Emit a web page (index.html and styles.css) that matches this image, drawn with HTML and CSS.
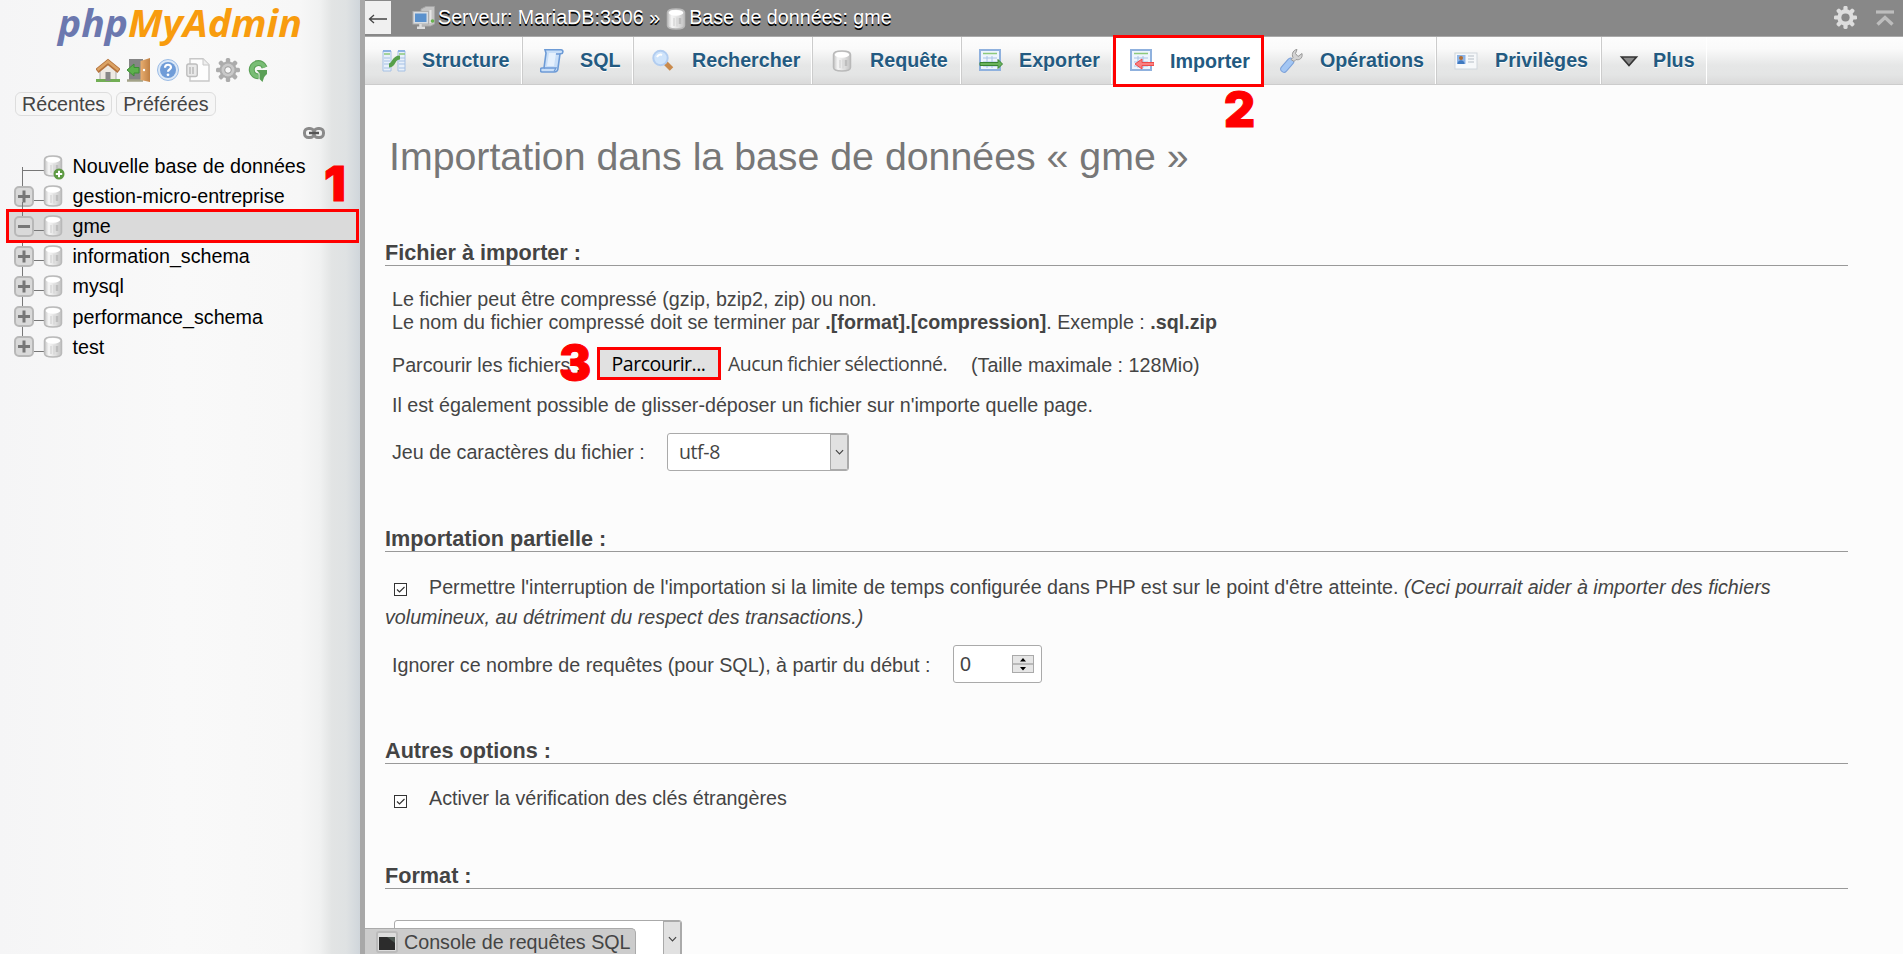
FILE: index.html
```html
<!DOCTYPE html>
<html lang="fr">
<head>
<meta charset="utf-8">
<title>phpMyAdmin - Importer</title>
<link rel="stylesheet" href="styles.css">
</head>
<body>
<svg class="defs" width="0" height="0">
  <defs>
    <linearGradient id="cyl" x1="0" x2="1" y1="0" y2="0"><stop offset="0" stop-color="#c4c4c4"/><stop offset=".25" stop-color="#f6f6f6"/><stop offset=".6" stop-color="#e2e2e2"/><stop offset="1" stop-color="#c2c2c2"/></linearGradient>
    <linearGradient id="door" x1="0" x2="1"><stop offset="0" stop-color="#e9ae70"/><stop offset="1" stop-color="#bf8044"/></linearGradient>
    <symbol id="db" viewBox="0 0 24 24"><path d="M3.500 5.500C3.500 3.500 6.500 2 12 2s8.500 1.500 8.500 3.500v13c0 2-3 3.500-8.500 3.500s-8.500-1.500-8.500-3.500z" fill="url(#cyl)" stroke="#b9b9b9" stroke-width="1.500"/><ellipse cx="12" cy="5.800" rx="7.300" ry="2.900" fill="#fff"/><path d="M10 11v8M13 10.500v9" stroke="#d8d8d8" stroke-width="1.500"/><path d="M16 11v6" stroke="#bdbdbd" stroke-width="2.500"/></symbol>
    <symbol id="gear" viewBox="0 0 24 24"><g fill="currentColor"><rect x="9.800" y="0" width="4.400" height="24" rx="1.500"/><rect x="0" y="9.800" width="24" height="4.400" rx="1.500"/><rect x="9.800" y="0" width="4.400" height="24" rx="1.500" transform="rotate(45 12 12)"/><rect x="9.800" y="0" width="4.400" height="24" rx="1.500" transform="rotate(135 12 12)"/><circle cx="12" cy="12" r="8.500"/></g></symbol>
    <symbol id="sheet" viewBox="0 0 24 24"><rect x="1" y="1" width="20" height="20" fill="#eef5fd" stroke="#8fb1de" stroke-width="2"/><path d="M4 4.500h14" stroke="#8cc97c" stroke-width="1.500"/><path d="M4 9h14M4 13h14M4 17h14M8 7v12M13 7v12" stroke="#a9c4e6" stroke-width="1"/></symbol>
  </defs>
</svg>
<div class="app">
  <aside class="nav">
    <svg class="logo" viewBox="0 0 250 46"><text x="2" y="32" textLength="70" lengthAdjust="spacingAndGlyphs" class="logo-a">php</text><text x="72" y="32" textLength="174" lengthAdjust="spacingAndGlyphs" class="logo-b">MyAdmin</text></svg>
    <div class="quick">
      <svg viewBox="0 0 24 24"><path d="M4 12 12 4l8 8v10H4z" fill="#eee9e2" stroke="#aaa"/><path d="M0 22.500h24" stroke="#72ae55" stroke-width="3"/><rect x="9.500" y="14" width="5" height="9" fill="#888"/><path d="M1 13 12 4 23 13" fill="none" stroke="#b4723c" stroke-width="5"/><path d="M1.500 12 12 3.500 22.500 12" fill="none" stroke="#dba263" stroke-width="2.600"/></svg>
      <svg viewBox="0 0 24 24"><rect x="3" y="1" width="14" height="21" fill="#858585"/><path d="M1 22.500h16" stroke="#a3a389" stroke-width="2.500"/><path d="M14.500 3 24 0v24l-9.500-2z" fill="url(#door)"/><circle cx="18" cy="12" r="1.200" fill="#fff"/><path d="M1 12 8 6V9.500h5v5.500H8v3z" fill="#5cb04c" stroke="#3d8f35"/></svg>
      <svg viewBox="0 0 24 24"><circle cx="12" cy="12" r="10.500" fill="#dbe8f7" stroke="#9bbce6"/><circle cx="12" cy="12" r="8" fill="#6f9cd8"/><path d="M9 9.800c0-4 6-4 6-.5 0 2-3 2-3 4.500" fill="none" stroke="#fff" stroke-width="2.200"/><circle cx="12" cy="16.800" r="1.400" fill="#fff"/></svg>
      <svg viewBox="0 0 24 24"><path d="M4 .8h13l6 6V23H4z" fill="#fdfdfd" stroke="#c8c8c8" stroke-width="1.400"/><path d="M17 1v6h6" fill="#eee" stroke="#c8c8c8"/><rect x=".8" y="6" width="10.500" height="12.500" rx="2" fill="#e9e9e9" stroke="#bdbdbd" stroke-width="1.400"/><path d="M4 9v7M7 9v7" stroke="#c6c6c6" stroke-width="2"/></svg>
      <svg class="g-gear" viewBox="0 0 24 24"><use href="#gear"/><circle cx="12" cy="12" r="6.500" fill="#c9c9c9"/><circle cx="12" cy="12" r="3.300" fill="#f8f8f8" stroke="#999"/></svg>
      <svg viewBox="0 0 24 24"><path d="M18.600 9.500A6.600 6.600 0 1 0 12.500 18.300" fill="none" stroke="#5ba057" stroke-width="6"/><path d="M18.600 9.500A6.600 6.600 0 1 0 12.500 18.300" fill="none" stroke="#79bd75" stroke-width="3.800"/><path d="M10.500 12H21v4l-2 2-1 1.500L16.500 24l-3-3v-5.500z" fill="#5ba057"/></svg>
    </div>
    <div class="lists"><span>Récentes</span><span>Préférées</span></div>
    <svg class="chain" viewBox="0 0 22 12"><rect x="1.500" y="1.500" width="9.500" height="9" rx="4" fill="none" stroke="#8a8a8a" stroke-width="3"/><rect x="11" y="1.500" width="9.500" height="9" rx="4" fill="none" stroke="#8a8a8a" stroke-width="3"/><path d="M6 6h10" stroke="#555" stroke-width="2.500"/></svg>
    <ul class="tree">
      <li class="first"><i class="box none"></i><svg><use href="#db"/></svg><svg class="add" viewBox="0 0 12 12"><circle cx="6" cy="6" r="5.500" fill="#5e9a43"/><path d="M6 2.800v6.400M2.800 6h6.400" stroke="#fff" stroke-width="2"/></svg><span>Nouvelle base de données</span></li>
      <li><i class="box plus"></i><svg><use href="#db"/></svg><span>gestion-micro-entreprise</span></li>
      <li class="current"><i class="box"></i><svg><use href="#db"/></svg><span>gme</span></li>
      <li><i class="box plus"></i><svg><use href="#db"/></svg><span>information_schema</span></li>
      <li><i class="box plus"></i><svg><use href="#db"/></svg><span>mysql</span></li>
      <li><i class="box plus"></i><svg><use href="#db"/></svg><span>performance_schema</span></li>
      <li><i class="box plus"></i><svg><use href="#db"/></svg><span>test</span></li>
    </ul>
    <b class="step step1">1</b>
  </aside>
  <main class="page">
    <header class="crumbs">
      <span class="hide"><svg viewBox="0 0 20 10"><path d="M19 5H1.500M6 1 1.500 5 6 9" fill="none" stroke="#444" stroke-width="1.300"/></svg></span>
      <svg class="srv" viewBox="0 0 24 24"><path d="M9 3 14 .5h8.500V18l-4 2H9z" fill="#c4c4c4" stroke="#a5a5a5"/><path d="M18.500 4v13" stroke="#e6e6e6" stroke-width="2"/><circle cx="20.500" cy="15" r="1.800" fill="#67b34d"/><rect x="1" y="5.500" width="15.500" height="12.500" fill="#d8dde2" stroke="#b0b0b0"/><rect x="3" y="7.500" width="11.500" height="8.500" fill="#5a91cd"/><path d="M8.500 18v3M5 21.800h8" stroke="#ddd" stroke-width="2.500"/></svg>
      <span class="c1">Serveur: MariaDB:3306 »</span>
      <svg class="cdb"><use href="#db"/></svg>
      <span>Base de données: gme</span>
      <svg class="cog" viewBox="0 0 24 24"><use href="#gear"/><circle cx="12" cy="12" r="4.300" fill="#888"/></svg>
      <svg class="top" viewBox="0 0 18 16"><path d="M0 2h18" stroke="#bdbdbd" stroke-width="3.200"/><path d="M1.500 14.500 9 7.500l7.500 7" fill="none" stroke="#bdbdbd" stroke-width="3.400"/></svg>
    </header>
    <nav class="tabs">
      <a class="w1"><svg viewBox="0 0 24 24"><path d="M1 2h8v20H1zM16 2h7v20h-7z" fill="#e8f0fa" stroke="#a5c0e4"/><path d="M1 2h8M16 2h7" stroke="#8db3e3" stroke-width="2"/><path d="M2 5h6M17 5h6" stroke="#8cc97c" stroke-width="1.500"/><path d="M2 9h6M2 12h6M2 15h6M2 19h6M17 9h6M17 12h6M17 15h6M17 19h6" stroke="#a5c0e4"/><path d="M7 16.500c6 0 3-8 11-8" fill="none" stroke="#56a04a" stroke-width="4.200"/></svg>Structure</a>
      <a class="w2"><svg viewBox="0 0 24 24"><path d="M5 .8h16c3 0 2 4 0 4h-1L18 19c0 3-2 4-4 4H2c-2 0-2-4 0-4h2L6 4z" fill="#c9dff8" stroke="#6d9bd6" stroke-width="1.600"/><path d="M4 19h12l-2 3.500M19.500 5h-4" fill="none" stroke="#6d9bd6" stroke-width="1.300"/><path d="M9 4h7l-2 13H7z" fill="#e6f1fd"/></svg>SQL</a>
      <a class="w3"><svg viewBox="0 0 24 24"><path d="m14.500 14 6 6" stroke="#c98a4c" stroke-width="5"/><circle cx="9.500" cy="9" r="7.200" fill="#cfe4fb" stroke="#b2cdf0" stroke-width="2"/><path d="M6 8c1-2 3-3 5-2" stroke="#fff" stroke-width="2" fill="none"/></svg>Rechercher</a>
      <a class="w4"><svg><use href="#db"/></svg>Requête</a>
      <a class="w5"><svg viewBox="0 0 24 24"><use href="#sheet"/><path d="M1 13.500h18v-3l4.500 4.500-4.500 4.500v-3H1z" fill="#69b35b" stroke="#398333"/></svg>Exporter</a>
      <a class="w6 active"><svg viewBox="0 0 24 24"><use href="#sheet"/><path d="M24 13.500H12v-3.500l-7 5 7 5v-3.500h12z" fill="#f98080" stroke="#ee4a4a"/></svg>Importer<b class="step step2">2</b></a>
      <a class="w7"><svg viewBox="0 0 24 24"><path d="M4 20 10.500 12.500" stroke="#7ba0d8" stroke-width="7.500" stroke-linecap="round"/><path d="m4 20 6.500-7.500" stroke="#a3c6f3" stroke-width="5.500" stroke-linecap="round"/><path d="m11 10.500 2-2c-2-4 1-8 4-8l-1.500 4 2.500 3 4-3c1 5-3 7-6 6l-2 2z" fill="#d3d3d3" stroke="#999"/></svg>Opérations</a>
      <a class="w8"><svg viewBox="0 0 24 24"><rect x="1" y="4" width="22" height="16" fill="#f6f8fa" stroke="#d0d6dc"/><rect x="3" y="6" width="8.500" height="9" fill="#8bb3e6"/><circle cx="7" cy="9" r="2" fill="#b06c30"/><path d="M3.500 15c0-5 7-5 7 0z" fill="#3f79c0"/><path d="M14 7h6M14 10h6M14 13h6" stroke="#b6bec6"/></svg>Privilèges</a>
      <a class="w9"><svg viewBox="0 0 24 24"><path d="M4.500 8h15L12 16.500z" fill="#888" stroke="#333" stroke-width="1.600"/></svg>Plus</a>
    </nav>
    <h2>Importation dans la base de données « gme »</h2>
    <section class="s1">
      <h3>Fichier à importer&nbsp;:</h3>
      <p class="intro">Le fichier peut être compressé (gzip, bzip2, zip) ou non.<br>Le nom du fichier compressé doit se terminer par <b>.[format].[compression]</b>. Exemple&nbsp;: <b>.sql.zip</b></p>
      <div class="file"><span class="flabel">Parcourir les fichiers&nbsp;:</span><span class="browse">Parcourir...</span><span class="chosen">Aucun fichier sélectionné.</span><span>(Taille maximale&nbsp;: 128Mio)</span><b class="step step3">3</b></div>
      <p class="drop">Il est également possible de glisser-déposer un fichier sur n'importe quelle page.</p>
      <div class="charset"><span>Jeu de caractères du fichier&nbsp;:</span><div class="select"><span>utf-8</span><i><svg viewBox="0 0 10 6"><path d="m1 1 4 4 4-4" fill="none" stroke="#444" stroke-width="1.300"/></svg></i></div></div>
    </section>
    <section class="s2">
      <h3>Importation partielle&nbsp;:</h3>
      <p class="opt"><svg class="check" viewBox="0 0 13 13"><rect x=".5" y=".5" width="12" height="12" fill="#fff" stroke="#333"/><path d="m3 6.500 2.500 2.500L10.500 4" fill="none" stroke="#333" stroke-width="1.200"/></svg>Permettre l'interruption de l'importation si la limite de temps configurée dans PHP est sur le point d'être atteinte. <em>(Ceci pourrait aider à importer des fichiers<br>volumineux, au détriment du respect des transactions.)</em></p>
      <div class="skip"><span>Ignorer ce nombre de requêtes (pour SQL), à partir du début&nbsp;:</span><div class="number"><span>0</span><svg viewBox="0 0 22 18"><rect x=".5" y=".5" width="21" height="17" fill="#e6e6e6" stroke="#aaa"/><path d="M0 9h22" stroke="#aaa" stroke-width="1.500"/><path d="M8 6.500h6l-3-3.500zM8 12h6l-3 3.500z"/></svg></div></div>
    </section>
    <section class="s3">
      <h3>Autres options&nbsp;:</h3>
      <p class="opt"><svg class="check" viewBox="0 0 13 13"><rect x=".5" y=".5" width="12" height="12" fill="#fff" stroke="#333"/><path d="m3 6.500 2.500 2.500L10.500 4" fill="none" stroke="#333" stroke-width="1.200"/></svg>Activer la vérification des clés étrangères</p>
    </section>
    <section class="s4">
      <h3>Format&nbsp;:</h3>
      <div class="select wide"><span></span><i><svg viewBox="0 0 10 6"><path d="m1 1 4 4 4-4" fill="none" stroke="#444" stroke-width="1.300"/></svg></i></div>
    </section>
    <div class="console"><svg viewBox="0 0 22 22"><rect x="1" y="1" width="20" height="20" rx="2" fill="#ddd" stroke="#bbb" stroke-width="2"/><path d="M3 6h16v13H3z" fill="#2c2c2c"/><path d="M11 6h8v6z" fill="#4b5550"/></svg>Console de requêtes SQL</div>
  </main>
</div>
</body>
</html>
```
FILE: styles.css
```css
*, *::before, *::after { box-sizing: border-box; }
body { margin: 0; background: #fcfcfc; color: #444; font: 19.710px "Liberation Sans", Arial, sans-serif; overflow: hidden; }
h2, h3, p, ul { margin: 0; padding: 0; font-weight: normal; }
svg { flex: none; }
.defs { position: absolute; }
.app { display: flex; height: 954px; overflow: hidden; }

.nav { position: relative; flex: none; width: 365px; border-right: 5px solid #a8a8a8; background: linear-gradient(90deg, #f5f5f6 0, #f9f9f9 180px, #f7f7f7 300px, #f0f1f1 320px, #e2e4e4 332px, #dfe2e3 346px, #d0d6db 360px); }
.logo { display: block; width: 250px; height: 46px; margin: 5px 0 0 56px; overflow: visible; }
.logo text { font-family: "Open Sans", sans-serif; font-style: italic; font-size: 37px; }
.logo-a { fill: #6c78af; font-weight: 700; }
.logo-b { fill: #f89c0e; font-weight: 700; }
.quick { display: flex; gap: 6px; margin: 7px 0 0 96px; }
.quick svg { width: 24px; height: 24px; }
.g-gear { color: #acacac; }
.lists { display: flex; gap: 4px; margin: 10px 0 0 15px; }
.lists span { height: 24px; padding: 0 6px; line-height: 23px; border: 1px solid #ddd; border-radius: 6px; background: #f6f6f6; }
.chain { display: block; width: 22px; height: 12px; margin: 11px 0 0 303px; }
.tree { list-style: none; margin-top: 12px; color: #000; }
.tree li { position: relative; display: flex; align-items: center; height: 30.100px; padding-left: 14px; line-height: 30px; }
.tree li::before { content: ""; position: absolute; left: 22px; top: -9px; width: 1px; height: 30px; background: #777; }
.tree li::after { content: ""; position: absolute; left: 22px; top: 19px; width: 22px; height: 1px; background: #777; }
.tree .first::before { top: 16px; height: 8px; }
.tree svg { position: relative; z-index: 1; width: 24px; height: 24px; margin-left: 7px; }
.tree li span { margin-left: 7.500px; position: relative; z-index: 1; }
.tree .add { position: absolute; left: 46px; top: 17px; width: 12px; height: 12px; }
.tree .current { z-index: 1; background: linear-gradient(#dadada, #dadada) 9px 0 / 348px 30px no-repeat; }
.tree .current span::before { content: ""; position: absolute; z-index: -1; left: -66.500px; top: -2px; width: 353px; height: 34px; border: 3px solid #f00; }
.box { position: relative; z-index: 1; flex: none; width: 20px; height: 21px; border: 2px solid #b8b8b8; border-radius: 5px; background: #d9d9d9; }
.box::before, .plus::after { content: ""; position: absolute; left: 2px; top: 7px; width: 12px; height: 3px; background: #777; }
.plus::after { transform: rotate(90deg); }
.box.none { visibility: hidden; }

.step { position: absolute; z-index: 5; color: #f00; font: 900 48px/48px Inter, sans-serif; text-shadow: none; -webkit-text-stroke: 1px #f00; }
.step1 { left: 324px; top: 160px; }
.step2 { right: 6px; top: 48px; }
.step3 { left: 174px; top: -8px; }

.page { position: relative; flex: 1; }
.crumbs { display: flex; height: 37px; background: #888; border-bottom: 1px solid #aaa; color: #fff; line-height: 35px; text-shadow: 0 1.500px 0 #000; }
.hide { width: 26px; height: 33px; margin: 1px 21px 0 0; background: #f0f0f0; display: flex; align-items: center; justify-content: center; padding-top: 3px; }
.hide svg { width: 20px; height: 10px; }
.srv { width: 24px; height: 24px; margin-top: 6px; }
.c1 { margin: 0 4px 0 2px; }
.cdb { width: 24px; height: 24px; margin: 7px 1px 0 0; }
.cog { width: 23px; height: 23px; margin: 6px 19px 0 auto; color: #ddd; }
.top { width: 18px; height: 16px; margin: 10px 9px 0 0; }
.tabs { display: flex; height: 48px; background: linear-gradient(#fdfdfd 0, #fafafa 25%, #e6e7e7 60%, #e4e5e5 80%, #dadada); border-bottom: 1px solid #ccc; }
.tabs a { position: relative; display: flex; align-items: center; gap: 16px; height: 47px; padding: 0 0 0 17px; border-left: 1px solid #ccc; box-shadow: inset -1px 0 #fff; font-weight: bold; color: #235a81; text-shadow: 0 1px 0 #fff; white-space: nowrap; }
.tabs svg { width: 24px; height: 24px; }
.tabs .w1 { width: 157px; border: 0; }
.w2 { width: 111px; }
.w3 { width: 179px; }
.w4 { width: 149px; }
.w5 { width: 151px; }
.tabs .w3, .tabs .w8 { gap: 17px; }
.tabs .active { width: 151px; height: 52px; margin: -2px 0 -3px 1px; border: 3px solid #f00; background: #fff; box-shadow: none; padding-left: 14px; }
.tabs .w7 { width: 172px; border: 0; padding-left: 16px; }
.w8 { width: 165px; }
.tabs .w9 { width: 106px; padding-left: 15px; gap: 12px; }

h2 { margin: 48px 0 60px 24px; font-size: 39.300px; line-height: 46px; color: #777; }
section { margin-left: 20px; width: 1463px; }
h3 { font-size: 21.650px; font-weight: bold; line-height: 27px; height: 27px; border-bottom: 1px solid #999; }
.s1 { height: 286px; }
.s2 { height: 212px; }
.s3 { height: 125px; }
.s4 { height: 92px; overflow: hidden; }
.intro { padding: 22px 0 13px 7px; line-height: 23px; }
.file { position: relative; display: flex; height: 36px; line-height: 36px; padding-left: 7px; }
.flabel { width: 205px; }
.browse { width: 124px; height: 33px; margin-right: 7px; border: 3px solid #f00; background: #e1e1e1; color: #000; font: 19.500px/28px "Open Sans", sans-serif; letter-spacing: -.5px; text-align: center; padding-right: 1px; }
.chosen { width: 243px; font-family: "Open Sans", sans-serif; font-size: 19.500px; letter-spacing: -.55px; line-height: 34px; white-space: nowrap; }
.drop { padding: 10px 0 16px 7px; line-height: 24px; }
.charset, .skip { display: flex; align-items: center; padding-left: 7px; }
.charset > span { width: 275px; padding-top: 1px; }
.select { display: flex; width: 182px; height: 38px; border: 1px solid #aaa; border-radius: 3px; background: #fff; overflow: hidden; }
.select span { flex: 1; padding-left: 11px; font: 19.500px/36px "Open Sans", sans-serif; letter-spacing: -.4px; }
.select i { display: flex; align-items: center; justify-content: center; width: 18px; border: 1px solid #aaa; background: #e1e1e1; }
.select i svg { width: 9px; height: 6px; }
.opt { padding-top: 20px; line-height: 30px; white-space: nowrap; }
.s3 .opt { padding-top: 19px; }
.check { width: 13px; height: 13px; margin: 0 22px 0 9px; vertical-align: -2px; }
.s3 .check { vertical-align: -3px; }
.skip { margin-top: 13px; }
.skip > span { width: 561px; padding-top: 2px; }
.number { display: flex; align-items: center; justify-content: space-between; width: 89px; height: 38px; padding: 0 7px 0 6px; border: 1px solid #aaa; border-radius: 3px; background: #fff; }
.number svg { width: 22px; height: 18px; }
.wide { width: 288px; margin: 31px 0 0 9px; }
.console { position: absolute; left: 0; bottom: 0; display: flex; align-items: center; width: 271px; height: 26px; padding: 1px 0 0 11px; gap: 6px; background: #ccc; border: solid #aaa; border-width: 1px 1px 0 0; border-radius: 0 5px 0 0; white-space: nowrap; }
.console svg { width: 22px; height: 22px; }
```
